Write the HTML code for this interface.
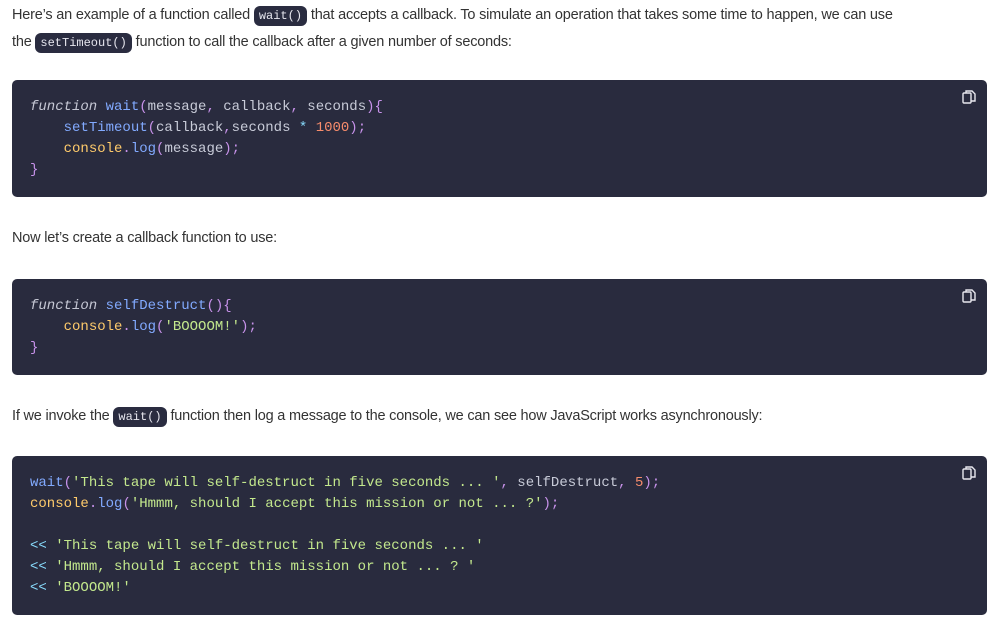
<!DOCTYPE html>
<html><head><meta charset="utf-8"><style>
body{margin:0;background:#fff;font-family:"Liberation Sans",sans-serif;color:#333;width:1003px;height:627px;overflow:hidden;position:relative}
p{position:absolute;left:12px;margin:0;font-size:14.5px;line-height:26px;letter-spacing:-0.2px}
code{background:#2a2c40;color:#e6e6ee;font-family:"Liberation Mono",monospace;font-size:12px;padding:3px 5px;border-radius:6px;letter-spacing:0}
.b{position:absolute;left:12px;width:975px;background:#292b3e;border-radius:5px;box-sizing:border-box;padding:17px 18px;font-family:"Liberation Mono",monospace;font-size:14px;line-height:21px;color:#c8cbd8;white-space:pre}
.k{font-style:italic;color:#c5c7d4}.f{color:#82aaff}.p{color:#c792ea}.n{color:#f78c6c}.y{color:#ffcb6b}.s{color:#c3e88d}.c{color:#89ddff}
.i{position:absolute;right:10px;top:9px}
</style></head><body>
<p style="top:2px">Here’s an example of a function called <code>wait()</code> that accepts a callback. To simulate an operation that takes some time to happen, we can use<br>the <code>setTimeout()</code> function to call the callback after a given number of seconds:</p>
<div class="b" style="top:80px;height:117px"><span class="k">function</span> <span class="f">wait</span><span class="p">(</span>message<span class="p">,</span> callback<span class="p">,</span> seconds<span class="p">){</span>
    <span class="f">setTimeout</span><span class="p">(</span>callback<span class="p">,</span>seconds <span class="c">*</span> <span class="n">1000</span><span class="p">);</span>
    <span class="y">console</span><span class="p">.</span><span class="f">log</span><span class="p">(</span>message<span class="p">);</span>
<span class="p">}</span><svg class="i" width="16" height="16" viewBox="0 0 16 16" fill="none" stroke="#e8e8ee" stroke-width="1.4"><rect x="2" y="4" width="8" height="10" rx="1"/><path d="M5 4V2h6l3 3v7h-4"/></svg></div>
<p style="top:225px">Now let’s create a callback function to use:</p>
<div class="b" style="top:279px;height:96px"><span class="k">function</span> <span class="f">selfDestruct</span><span class="p">(){</span>
    <span class="y">console</span><span class="p">.</span><span class="f">log</span><span class="p">(</span><span class="s">'BOOOOM!'</span><span class="p">);</span>
<span class="p">}</span><svg class="i" width="16" height="16" viewBox="0 0 16 16" fill="none" stroke="#e8e8ee" stroke-width="1.4"><rect x="2" y="4" width="8" height="10" rx="1"/><path d="M5 4V2h6l3 3v7h-4"/></svg></div>
<p style="top:403px">If we invoke the <code>wait()</code> function then log a message to the console, we can see how JavaScript works asynchronously:</p>
<div class="b" style="top:456px;height:159px"><span class="f">wait</span><span class="p">(</span><span class="s">'This tape will self-destruct in five seconds ... '</span><span class="p">,</span> selfDestruct<span class="p">,</span> <span class="n">5</span><span class="p">);</span>
<span class="y">console</span><span class="p">.</span><span class="f">log</span><span class="p">(</span><span class="s">'Hmmm, should I accept this mission or not ... ?'</span><span class="p">);</span>

<span class="c">&lt;&lt;</span> <span class="s">'This tape will self-destruct in five seconds ... '</span>
<span class="c">&lt;&lt;</span> <span class="s">'Hmmm, should I accept this mission or not ... ? '</span>
<span class="c">&lt;&lt;</span> <span class="s">'BOOOOM!'</span><svg class="i" width="16" height="16" viewBox="0 0 16 16" fill="none" stroke="#e8e8ee" stroke-width="1.4"><rect x="2" y="4" width="8" height="10" rx="1"/><path d="M5 4V2h6l3 3v7h-4"/></svg></div>
</body></html>
